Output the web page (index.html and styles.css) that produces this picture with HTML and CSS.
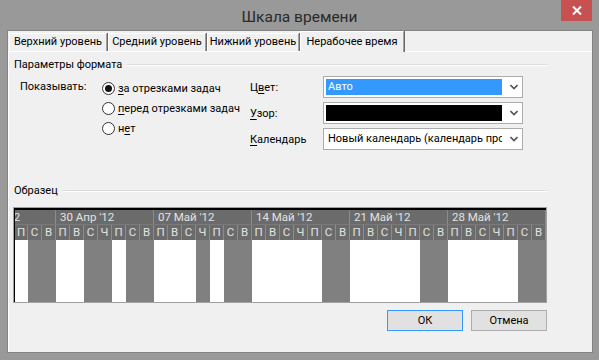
FILE: index.html
```html
<!DOCTYPE html>
<html lang="ru">
<head>
  <meta charset="UTF-8" />
  <title>Шкала времени</title>
  <link rel="stylesheet" href="styles.css">
</head>
<body>

  <div class="window">

    <!-- Title bar -->
    <div class="titlebar">
      <div class="title">Шкала времени</div>
      <button class="close" aria-label="Закрыть">
        <svg width="10" height="9" viewBox="0 0 10 9">
          <path d="M1 0.5 L9 8.5 M9 0.5 L1 8.5" stroke="#fff" stroke-width="2" fill="none" />
        </svg>
      </button>
    </div>

    <div class="client">

      <!-- Tabs -->
      <div class="tabs">
        <div class="tab tab-top">Верхний уровень</div>
        <div class="tab tab-mid">Средний уровень</div>
        <div class="tab tab-low">Нижний уровень</div>
        <div class="tab tab-off active">Нерабочее время</div>
      </div>

      <div class="page">

        <!-- Format options -->
        <div class="section section-first">
          <span>Параметры формата</span>
          <i class="rule"></i>
        </div>

        <div class="format">
          <div class="show-label">Показывать:</div>

          <div class="radios">
            <label class="radio checked"><span class="dot"></span><span><u>з</u>а отрезками задач</span></label>
            <label class="radio"><span class="dot"></span><span><u>п</u>еред отрезками задач</span></label>
            <label class="radio"><span class="dot"></span><span>н<u>е</u>т</span></label>
          </div>

          <div class="fields">
            <span>Ц<u>в</u>ет:</span>
            <div class="combo">
              <span class="val hl">Авто</span>
              <span class="arrow"><svg width="8" height="6" viewBox="0 0 8 6"><path d="M0.5 1 L4 4.5 L7.5 1" stroke="#555" stroke-width="1.6" fill="none" /></svg></span>
            </div>

            <span><u>У</u>зор:</span>
            <div class="combo">
              <span class="val solid"></span>
              <span class="arrow"><svg width="8" height="6" viewBox="0 0 8 6"><path d="M0.5 1 L4 4.5 L7.5 1" stroke="#555" stroke-width="1.6" fill="none" /></svg></span>
            </div>

            <span><u>К</u>алендарь</span>
            <div class="combo">
              <span class="val">Новый календарь (календарь проекта)</span>
              <span class="arrow"><svg width="8" height="6" viewBox="0 0 8 6"><path d="M0.5 1 L4 4.5 L7.5 1" stroke="#555" stroke-width="1.6" fill="none" /></svg></span>
            </div>
          </div>
        </div>

        <!-- Sample -->
        <div class="section section-sample">
          <span>Образец</span>
          <i class="rule"></i>
        </div>

        <div class="timeline">
          <div class="tl-inner">
            <div class="weeks">
              <div class="wk wk-part"><span class="wk-text">23 Апр '12</span></div>
              <div class="wk">30 Апр '12</div>
              <div class="wk">07 Май '12</div>
              <div class="wk">14 Май '12</div>
              <div class="wk">21 Май '12</div>
              <div class="wk">28 Май '12</div>
            </div>
            <div class="days">
              <div class="day first"><span>П</span></div>
              <div class="day off"><span>С</span></div>
              <div class="day off"><span>В</span></div>

              <div class="day"><span>П</span></div>
              <div class="day"><span>В</span></div>
              <div class="day off"><span>С</span></div>
              <div class="day off"><span>Ч</span></div>
              <div class="day"><span>П</span></div>
              <div class="day off"><span>С</span></div>
              <div class="day off"><span>В</span></div>

              <div class="day"><span>П</span></div>
              <div class="day"><span>В</span></div>
              <div class="day"><span>С</span></div>
              <div class="day off"><span>Ч</span></div>
              <div class="day"><span>П</span></div>
              <div class="day off"><span>С</span></div>
              <div class="day off"><span>В</span></div>

              <div class="day"><span>П</span></div>
              <div class="day"><span>В</span></div>
              <div class="day"><span>С</span></div>
              <div class="day"><span>Ч</span></div>
              <div class="day"><span>П</span></div>
              <div class="day off"><span>С</span></div>
              <div class="day off"><span>В</span></div>

              <div class="day"><span>П</span></div>
              <div class="day"><span>В</span></div>
              <div class="day"><span>С</span></div>
              <div class="day"><span>Ч</span></div>
              <div class="day"><span>П</span></div>
              <div class="day off"><span>С</span></div>
              <div class="day off"><span>В</span></div>

              <div class="day"><span>П</span></div>
              <div class="day"><span>В</span></div>
              <div class="day"><span>С</span></div>
              <div class="day"><span>Ч</span></div>
              <div class="day"><span>П</span></div>
              <div class="day off"><span>С</span></div>
              <div class="day off"><span>В</span></div>
            </div>
          </div>
        </div>

        <!-- Buttons -->
        <div class="buttons">
          <button class="btn default">ОК</button>
          <button class="btn">Отмена</button>
        </div>

      </div>
    </div>
  </div>

</body>
</html>
```

FILE: styles.css
```css
/* --- Reset & Layout --- */
* {
  box-sizing: border-box;
  margin: 0;
  padding: 0;
}
body {
  font-family: Roboto, "Liberation Sans", Arial, sans-serif;
  font-size: 11px;
  color: #000;
  background: #999;
}
u {
  text-decoration: underline;
  text-underline-offset: 2px;
}

/* --- Window frame --- */
.window {
  width: 599px;
  height: 360px;
  background: #999;
  display: flex;
  flex-direction: column;
}

.titlebar {
  height: 30px;
  display: grid;
  grid-template-columns: 1fr auto 1fr;
}

.title {
  grid-column: 2;
  font-size: 15.5px;
  line-height: 26px;
  padding-top: 4px;
  color: #2a2a2a;
}

.close {
  grid-column: 3;
  justify-self: end;
  width: 31px;
  height: 21px;
  margin-right: 7px;
  border: none;
  background: #c75050;
  display: flex;
  align-items: center;
  justify-content: center;
}

.client {
  flex: 1;
  margin: 0 6px 7px 7px;
  border: 1px solid #848484;
  background: #f0f0f0;
  display: flex;
  flex-direction: column;
}

/* --- Tabs --- */
.tabs {
  height: 21px;
  display: flex;
  align-items: flex-end;
  gap: 1px;
  padding-left: 1px;
  border-bottom: 1px solid #fff;
}

.tab {
  height: 18px;
  line-height: 16px;
  text-align: center;
  white-space: nowrap;
  border-top: 1px solid #fff;
  border-left: 1px solid #fff;
  border-right: 1px solid #a0a0a0;
  box-shadow: 1px 0 0 #696969;
}

.tab-top { width: 98px; }
.tab-mid { width: 98px; }
.tab-low { width: 92px; }
.tab-off { width: 104px; }

.tab.active {
  height: 21px;
  line-height: 20px;
  margin-bottom: -1px;
  background: #f0f0f0;
}

/* --- Page --- */
.page {
  flex: 1;
  border-left: 1px solid #fff;
  padding-left: 5px;
}

.section {
  width: 533px;
  display: flex;
  align-items: center;
  line-height: 16px;
}

.section .rule {
  flex: 1;
  height: 2px;
  margin-left: 5px;
  border-top: 1px solid #dcdcdc;
  border-bottom: 1px solid #fff;
}

.section-first { margin-top: 5px; }
.section-sample { margin-top: 33px; }

.format {
  display: flex;
  margin-top: 3px;
}

.show-label {
  width: 82px;
  margin-left: 6px;
  line-height: 22px;
}

.radios {
  width: 148px;
  padding-top: 2px;
  display: flex;
  flex-direction: column;
}

.radio {
  height: 20px;
  display: flex;
  align-items: center;
  gap: 3px;
  white-space: nowrap;
}

.radio .dot {
  width: 13px;
  height: 13px;
  border-radius: 50%;
  border: 1px solid #333;
  background: #fff;
  display: flex;
  align-items: center;
  justify-content: center;
}

.radio.checked .dot::after {
  content: "";
  width: 7px;
  height: 7px;
  border-radius: 50%;
  background: #111;
}

.fields {
  display: grid;
  grid-template-columns: 73px 200px;
  grid-auto-rows: 22px;
  row-gap: 4px;
  align-items: center;
}

.combo {
  height: 22px;
  border: 1px solid #acacac;
  background: #fff;
  display: flex;
  align-items: center;
  padding: 2px 1px 2px 2px;
}

.combo .val {
  width: 176px;
  height: 16px;
  line-height: 16px;
  padding-left: 2px;
  overflow: hidden;
  white-space: nowrap;
}

.combo .val.hl {
  background: #3399ff;
  color: #fff;
}

.combo .val.solid {
  background: #000;
}

.combo .arrow {
  flex: 1;
  display: flex;
  align-items: center;
  padding-left: 8px;
}

/* --- Timeline sample --- */
.timeline {
  width: 534px;
  margin: 8px 0 0 -1px;
  border: 1px solid #a0a0a0;
}

.tl-inner {
  border-top: 2px solid #000;
  border-left: 1px solid #000;
  overflow: hidden;
  color: #e2e2e2;
  font-size: 11.5px;
}

.weeks {
  display: flex;
  height: 15px;
  background: #6b6b6b;
  border-bottom: 1px solid #7a7a7a;
  line-height: 14px;
}

.wk {
  flex: none;
  width: 98px;
  padding-left: 4px;
  border-right: 1px solid #8c8c8c;
  white-space: nowrap;
  overflow: hidden;
}

.wk-part {
  width: 41px;
  padding-left: 0;
  display: flex;
  justify-content: flex-end;
}

.wk-part .wk-text {
  flex: none;
  width: 93px;
  padding-left: 4px;
}

.days {
  display: flex;
  height: 77px;
}

.day {
  flex: none;
  width: 14px;
  background: #fff;
}

.day.first { width: 13px; }
.day.off { background: #808080; }

.day span {
  display: block;
  height: 15px;
  line-height: 15px;
  text-align: center;
  background: #6b6b6b;
  border-right: 1px solid #8c8c8c;
}

/* --- Buttons --- */
.buttons {
  width: 533px;
  margin-top: 7px;
  display: flex;
  justify-content: flex-end;
  gap: 8px;
}

.btn {
  width: 76px;
  height: 21px;
  font-family: inherit;
  font-size: 11px;
  color: #000;
  background: #e1e1e1;
  border: 1px solid #adadad;
}

.btn.default {
  border-color: #3399ff;
}
```
